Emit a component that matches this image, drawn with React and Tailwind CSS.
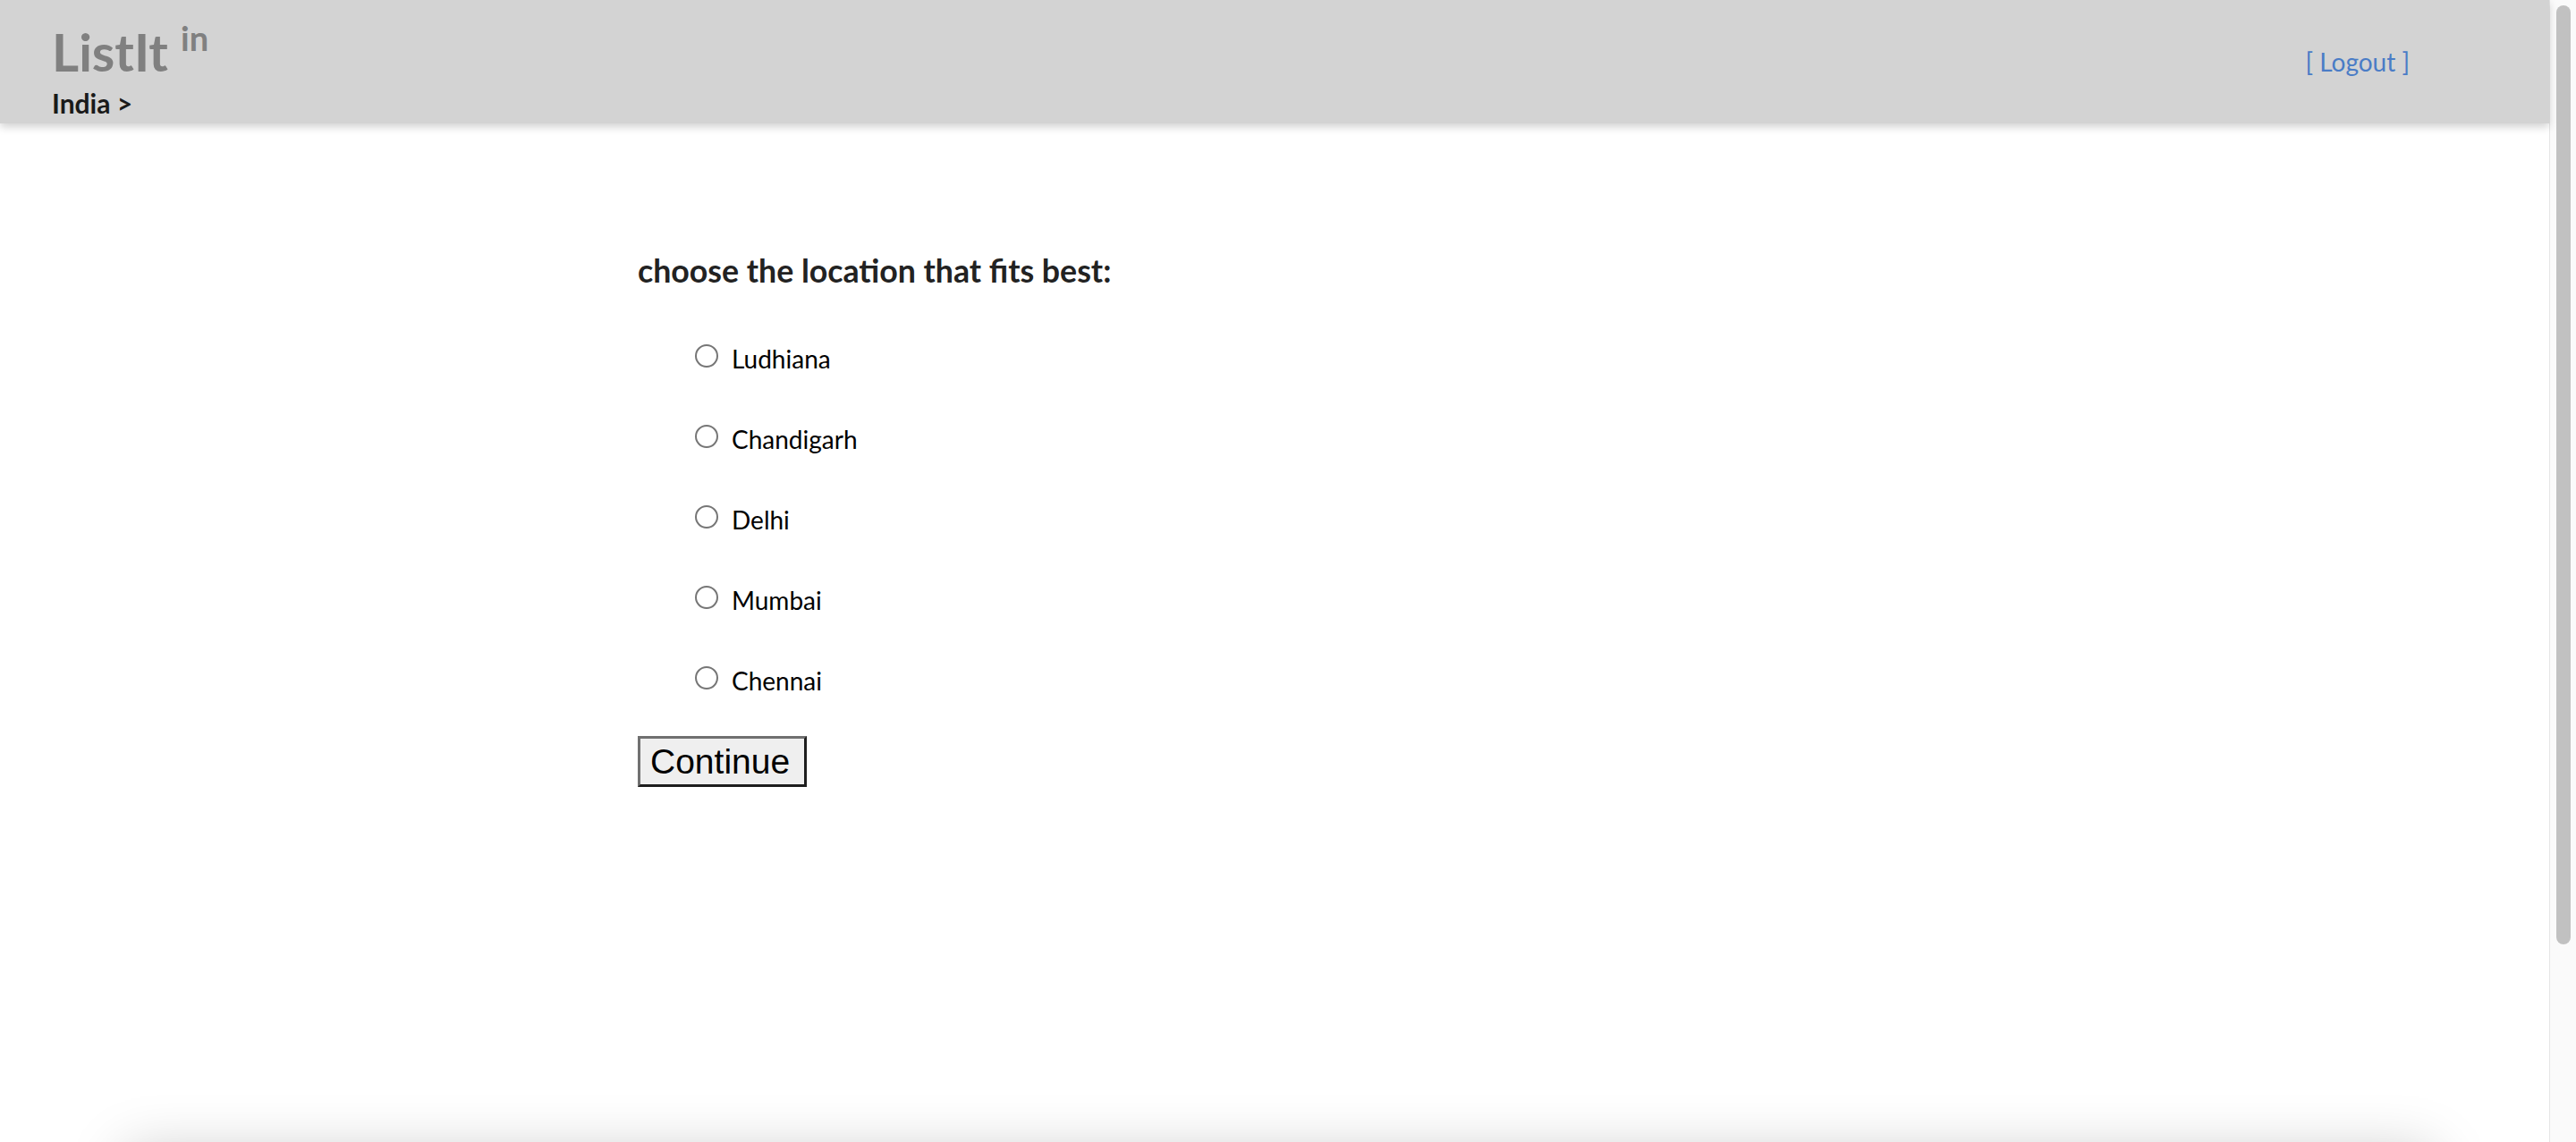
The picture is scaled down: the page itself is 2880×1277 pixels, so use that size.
import React, { useState } from "react";

const cities = ["Ludhiana", "Chandigarh", "Delhi", "Mumbai", "Chennai"];

export default function App() {
  const [city, setCity] = useState("");

  return (
    <div className="flex h-[1277px] w-full overflow-hidden bg-white font-['Lato','Open_Sans',sans-serif]">
      {/* Page */}
      <div className="flex min-w-0 flex-1 flex-col">
        <header className="relative z-10 flex h-[138px] shrink-0 items-start justify-between bg-[#d3d3d3] pl-[58px] pr-[156px] pt-[23px] shadow-[0_4px_9px_rgba(0,0,0,0.18)]">
          <div>
            <div className="h-[70px] text-[58px] font-bold leading-[1.2] text-[#808080]">
              ListIt{" "}
              <span className="align-[23px] text-[38px] leading-none">in</span>
            </div>
            <div className="mt-[4px] text-[30px] font-bold leading-[1.2] text-[#1a1a1a]">India &gt;</div>
          </div>
          <a href="#" className="mt-[30px] text-[28px] leading-[1.2] text-[#4a7cc6]">
            [ Logout ]
          </a>
        </header>

        <main className="pl-[713px] pt-[144px]">
          <form onSubmit={(e) => e.preventDefault()}>
            <h2 className="text-[35.7px] font-bold leading-[1.2] text-[#222]">choose the location that fits best:</h2>

            <div className="mt-[59px] flex flex-col gap-[56px] pl-[64px]">
              {cities.map((c) => (
                <label key={c} className="flex h-[34px] items-start gap-[17px] text-[28px] leading-[34px] text-black">
                  <input
                    type="radio"
                    name="city"
                    value={c}
                    checked={city === c}
                    onChange={() => setCity(c)}
                    className="m-0 mt-[1px] h-[26px] w-[26px] shrink-0 appearance-none rounded-full border-2 border-[#767676] bg-white checked:border-[8px] checked:border-[#1a73e8]"
                  />
                  <span className="-ml-[2px]">{c}</span>
                </label>
              ))}
            </div>

            <button
              type="submit"
              className="mt-[45px] flex h-[57px] w-[189px] items-center border-[3px] border-b-[#1e1e1e] border-l-[#707070] border-r-[#1e1e1e] border-t-[#707070] bg-[#efefef] pl-[11px] font-['Liberation_Sans',Arial,sans-serif] text-[39px] leading-none text-black"
            >
              Continue
            </button>
          </form>
        </main>

        {/* footer just below the fold */}
        <footer className="ml-[140px] mr-[130px] mt-[409px] h-[200px] shrink-0 bg-white shadow-[0_0_60px_rgba(0,0,0,0.22)]"></footer>
      </div>

      {/* Scrollbar */}
      <div className="w-[30px] shrink-0 border-l border-[#e6e6e6] bg-[#fafafa] pl-[7px] pr-[6px] pt-[6px]">
        <div className="h-[1050px] rounded-full bg-[#c1c1c1]"></div>
      </div>
    </div>
  );
}
